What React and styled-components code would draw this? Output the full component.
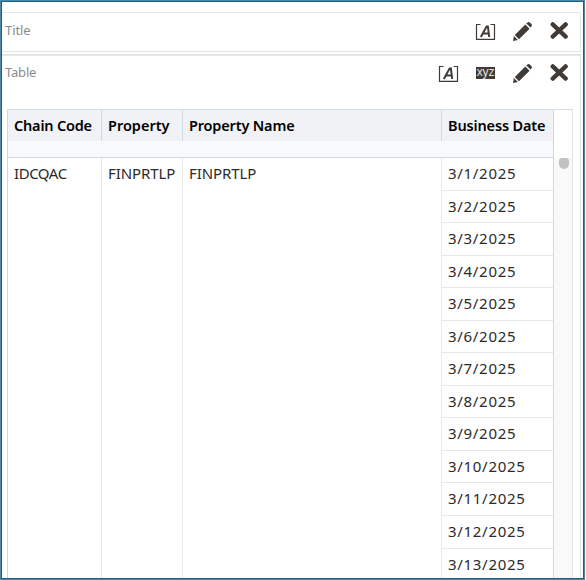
import React from "react";
import styled, { createGlobalStyle } from "styled-components";

const Global = createGlobalStyle`
  * { box-sizing: border-box; }
  body { margin: 0; background: #fff; overflow: hidden; }
`;

const Frame = styled.main`
  width: 585px;
  height: 580px;
  background: #fff;
  border: 1px solid #4f88a5;
  font-family: "Noto Sans", sans-serif;
`;

const Viewport = styled.div`
  height: 578px;
  overflow: hidden;
  border: 1px solid #1c5f84;
  padding: 10px 2px 0 0;
`;

const Panel = styled.section`
  height: ${(p) => p.$height}px;
  border: solid #e6e6e6;
  border-width: ${(p) => (p.$open ? "2px 1px 0 0" : "1px 1px 1px 0")};
  margin-bottom: ${(p) => (p.$open ? 0 : 2)}px;
`;

const PanelBar = styled.header`
  display: flex;
  justify-content: space-between;
  height: ${(p) => p.$height}px;
  padding: ${(p) => p.$top}px 10px 0 3px;
`;

const PanelName = styled.span`
  margin-top: -1px;
  font-size: 13px;
  line-height: 18px;
  letter-spacing: ${(p) => p.$spacing}px;
  color: #8b8b8b;
`;

const Tools = styled.div`
  display: flex;
  gap: 16px;
`;

const ToolButton = styled.button`
  width: 21px;
  height: 20px;
  padding: 0;
  border: 0;
  background: none;
  svg { display: block; }
`;

const Grid = styled.div`
  width: 566px;
  height: 480px;
  margin-left: 5px;
  display: grid;
  grid-template-columns: 547px 19px;
  border-top: 1px solid #d6dee5;
`;

const TableArea = styled.div`
  border-left: 1px solid #cfdae2;
  border-right: 1px solid #cfdae2;
`;

const HeaderRow = styled.div`
  display: grid;
  grid-template-columns: 94px 81px 259px 111px;
  height: 48px;
  background: #f7f9fd;
  border-bottom: 1px solid #cfdae2;
`;

const HeaderCell = styled.div`
  height: 31px;
  padding-left: 6px;
  background: #f1f2f6;
  border-right: ${(p) => (p.$last ? 0 : 1)}px solid #cfdae2;
  font-size: 14.5px;
  font-weight: 600;
  line-height: 31px;
  letter-spacing: ${(p) => p.$spacing}px;
  white-space: nowrap;
  color: #000;
`;

const Body = styled.div`
  display: grid;
  grid-template-columns: 94px 81px 259px 111px;
  height: 431px;
`;

const Column = styled.div`
  border-right: ${(p) => (p.$last ? 0 : 1)}px solid #e8e8e8;
`;

const Cell = styled.div`
  height: 32.55px;
  padding-left: 6px;
  border-bottom: ${(p) => (p.$ruled ? 1 : 0)}px solid #e8e8e8;
  font-size: 15px;
  line-height: 31px;
  letter-spacing: ${(p) => p.$spacing}px;
  white-space: nowrap;
  color: #2b2b2b;
`;

const Gutter = styled.div`
  border-right: 1px solid #e3e3e3;
  padding-top: 48px;
`;

const Track = styled.div`
  height: 431px;
  padding-left: 5px;
  background: #f9f9f9;
`;

const Thumb = styled.div`
  width: 10px;
  height: 11px;
  border-radius: 3px 3px 5px 5px;
  background: #c1c1c1;
`;

const INK = "#403b36";

const FormatIcon = () => (
  <svg width="21" height="20" viewBox="0 0 21 20" fill="none" stroke={INK}>
    <path d="M5.5 2.5H1.5V17.3H19.5V2.5H15.5" strokeWidth="1.2" />
    <path d="M5.8 15L11.6 4.6H12.9L14.2 15M8 11.6H14" strokeWidth="2" />
  </svg>
);

const ValueLabel = styled.div`
  width: 19px;
  height: 12px;
  margin: 3px 0 0 1px;
  background: ${INK};
  color: #e4e2df;
  font: 12px/10px "Liberation Sans", sans-serif;
  letter-spacing: -0.2px;
  text-align: center;
`;

const PencilIcon = () => (
  <svg width="21" height="20" viewBox="0 0 21 20" fill={INK}>
    <path d="M13.3 2.4L17.6 6.7L7 17.2L2.8 13Z" />
    <path d="M14.3 1.4L15.5.4Q16.8-.4 17.9.6L19.5 2.2Q20.4 3.2 19.5 4.3L18.5 5.6Z" />
    <path d="M1.9 14L5.9 18L1 19Z" />
  </svg>
);

const CloseIcon = () => (
  <svg width="21" height="20" viewBox="0 0 21 20" fill="none" stroke={INK}>
    <path d="M3.7 2.4L16.7 14.6M16.7 2.4L3.7 14.6" strokeWidth="4.3" strokeLinecap="round" />
  </svg>
);

const Actions = ({ withValues }) => (
  <Tools>
    <ToolButton aria-label="Format"><FormatIcon /></ToolButton>
    {withValues && <ToolButton as="div"><ValueLabel>xyz</ValueLabel></ToolButton>}
    <ToolButton aria-label="Edit"><PencilIcon /></ToolButton>
    <ToolButton aria-label="Remove"><CloseIcon /></ToolButton>
  </Tools>
);

const headers = [["Chain Code", -0.2], ["Property", 0], ["Property Name", -0.17], ["Business Date", -0.15]];
const days = Array.from({ length: 13 }, (_, i) => `3/${i + 1}/2025`);

export default function App() {
  return (
    <>
      <Global />
      <Frame>
        <Viewport>
          <Panel $height={40}>
            <PanelBar $height={38} $top={9}>
              <PanelName $spacing={-0.1}>Title</PanelName>
              <Actions />
            </PanelBar>
          </Panel>
          <Panel $open $height={524}>
            <PanelBar $height={53} $top={8}>
              <PanelName $spacing={-0.2}>Table</PanelName>
              <Actions withValues />
            </PanelBar>
            <Grid>
              <TableArea>
                <HeaderRow>
                  {headers.map(([label, spacing], i) => (
                    <HeaderCell key={label} $spacing={spacing} $last={i === 3}>{label}</HeaderCell>
                  ))}
                </HeaderRow>
                <Body>
                  <Column><Cell $spacing={-0.45}>IDCQAC</Cell></Column>
                  <Column><Cell $spacing={-0.1}>FINPRTLP</Cell></Column>
                  <Column><Cell $spacing={-0.1}>FINPRTLP</Cell></Column>
                  <Column $last>
                    {days.map((day) => <Cell key={day} $ruled $spacing={0.7}>{day}</Cell>)}
                  </Column>
                </Body>
              </TableArea>
              <Gutter><Track><Thumb /></Track></Gutter>
            </Grid>
          </Panel>
        </Viewport>
      </Frame>
    </>
  );
}
